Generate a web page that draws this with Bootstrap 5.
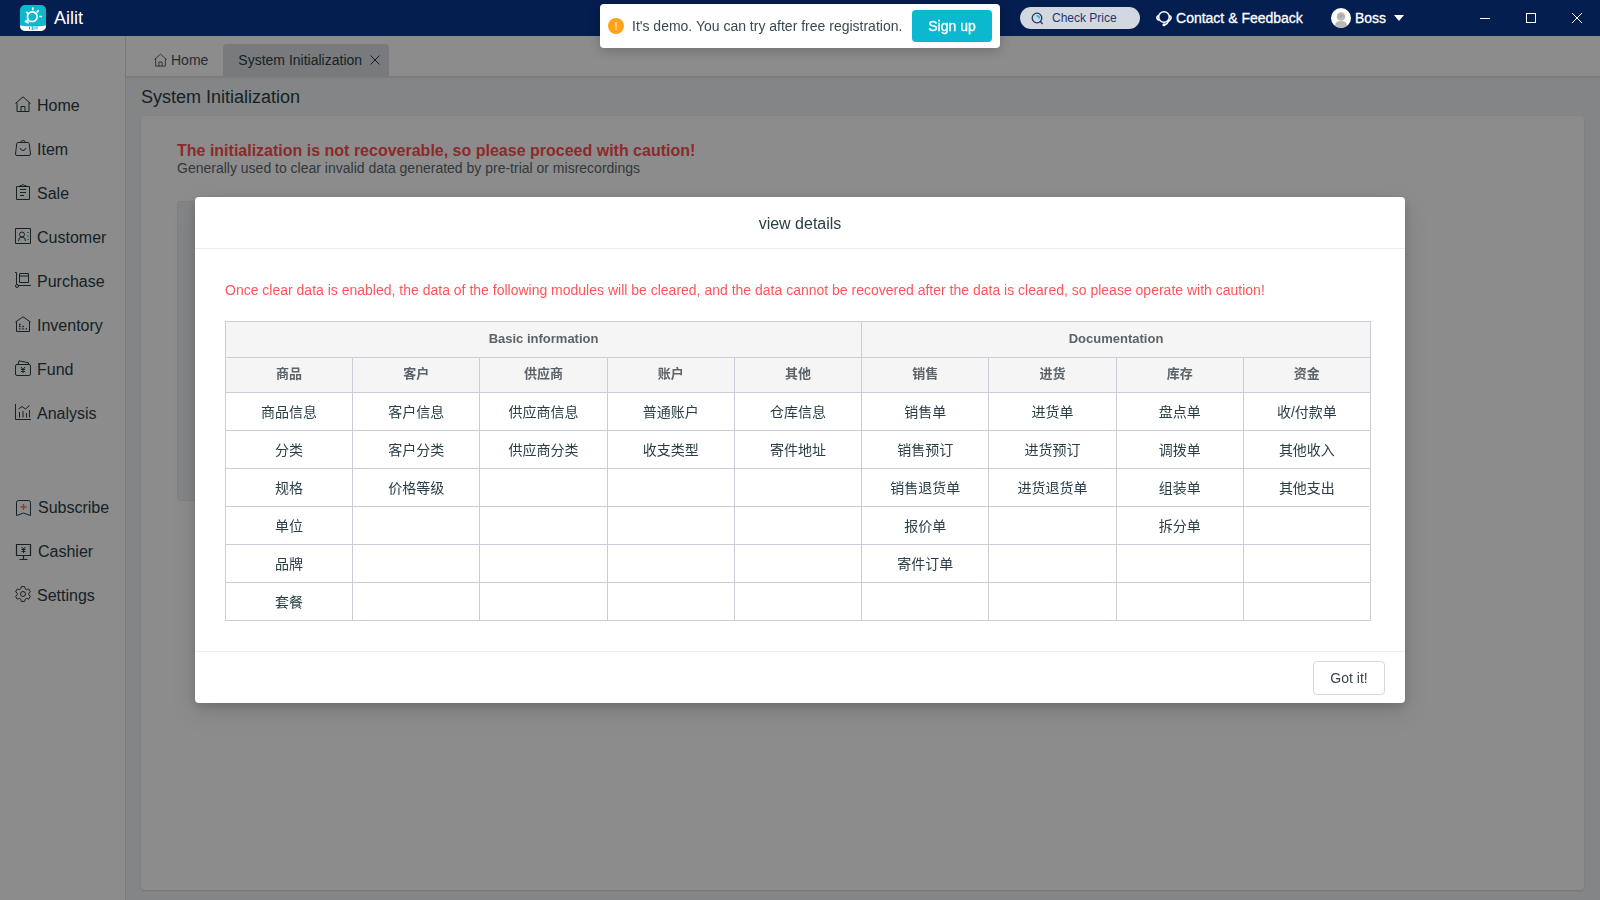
<!DOCTYPE html>
<html lang="en">
<head>
<meta charset="utf-8">
<meta name="viewport" content="width=device-width, initial-scale=1">
<title>Ailit - System Initialization</title>
<link href="https://cdn.jsdelivr.net/npm/bootstrap@5.3.0/dist/css/bootstrap.min.css" rel="stylesheet">
<style>
  :root { --ink: #293e45; --navy: #051e50; --cyan: #0bb8d0; --line: #c8cdd6; }
  body { font-family: "Liberation Sans", "Noto Sans CJK SC", sans-serif; font-size: 14px; line-height: 22px; color: var(--ink); background: #f0f2f5; }
  svg { display: block; flex: none; fill: none; stroke: currentColor; }
  svg.solid { stroke: none; }
  a { color: inherit; text-decoration: none; }
  .topbar { height: 36px; background: var(--navy); color: #fff; z-index: 1060; padding-left: 20px; }
  .brand-name { font-size: 18px; }
  .price-btn { width: 120px; height: 22px; background: #d3d7df; color: #1f3769; font-size: 12px; line-height: 22px; border: 0; border-radius: 11px; padding: 0 11px; }
  .bare-btn { background: none; border: 0; padding: 0; color: inherit; }
  .window-controls { margin-left: 58px; }
  .win-btn { width: 46px; height: 36px; }
  .heavy { -webkit-text-stroke: 0.3px currentColor; }
  .heavy svg { -webkit-text-stroke: 0; }
  .demo-bar { left: 50%; top: 4px; width: 400px; height: 44px; margin-left: -200px; z-index: 1070; color: #3a4a50; border-radius: 4px; box-shadow: 0 3px 12px rgba(0,0,0,.2); padding: 0 8px; }
  .signup-btn { width: 80px; height: 32px; background: var(--cyan); color: #fff; border: 0; border-radius: 4px; padding: 0; font-size: 14px; }
  .sidebar { width: 126px; border-right: 1px solid #dfe1e6; padding-top: 48px; }
  .side-link { height: 44px; font-size: 16px; padding-left: 15px; gap: 6px; }
  .side-link svg { margin-bottom: 4px; }
  .side-link svg.centered { margin-bottom: 0; }
  .side-extra { margin-top: 50px; }
  .tabbar { height: 41px; border-bottom: 1px solid #dcdfe2; padding: 8px 0 0 14px; box-shadow: 0 1px 2px rgba(0,0,0,.06); }
  .tab-link { height: 32px; padding: 0 15px 0 14px; color: #45535a; }
  .tab-link.current { background: #dcdfe3; color: var(--ink); border-radius: 4px 4px 0 0; padding: 0 9px 0 15px; }
  .page-area { padding: 0 16px 10px 15px; }
  .page-title { font-size: 18px; line-height: 24px; margin: 8px 0 7px; font-weight: 400; }
  .panel { border-radius: 4px; padding: 25px 36px; box-shadow: 0 1px 2px rgba(0,0,0,.12); }
  .warn-title { font-size: 16px; line-height: 20px; font-weight: 700; color: #ff4d4f; margin: 0; }
  .warn-sub { line-height: 15px; color: #5c686d; }
  .well-box { height: 300px; width: 80%; margin-top: 25px; background: #f0f2f5; border: 1px solid #e4e7ea; border-radius: 4px; }
  .modal-backdrop.show { opacity: .45; }
  .details-dialog { max-width: 1210px; margin: 197px auto 0; }
  .details-dialog .modal-content { border: 0; border-radius: 4px; color: var(--ink); box-shadow: 0 6px 16px rgba(0,0,0,.08), 0 9px 28px 8px rgba(0,0,0,.06), 0 3px 8px rgba(0,0,0,.12); }
  .details-dialog .modal-header { height: 52px; border-bottom: 1px solid #ebedee; padding: 2px 0 0; }
  .details-dialog .modal-title { font-size: 16px; line-height: 24px; font-weight: 400; }
  .details-dialog .modal-body { padding: 30px 34px 30px 30px; }
  .details-dialog .modal-footer { height: 52px; border-top: 1px solid #ebedee; padding: 0 20px; }
  .details-dialog .modal-footer > * { margin: 0; }
  .caution { color: #ff5558; margin-bottom: 20px; }
  .module-table { table-layout: fixed; border-color: var(--line); margin: 0; text-align: center; }
  .module-table > :not(caption) > * > * { border: 1px solid var(--line); color: var(--ink); padding: 9px 4px 7px; height: 38px; line-height: 21px; background: #fff; }
  .module-table > thead > tr > th { background: #f5f5f5; color: #5a646a; font-size: 13px; line-height: 18px; height: 35px; padding: 7px 4px 9px; }
  .module-table > thead > tr:first-child > th { height: 36px; }
  .got-btn { width: 72px; height: 34px; font-size: 14px; padding: 2px 0 0; border: 1px solid #d5d9dc; border-radius: 4px; color: #34464c; background: #fff; }
</style>
</head>
<body class="vh-100 overflow-hidden d-flex flex-column">

<header class="topbar d-flex align-items-center position-relative flex-shrink-0">
  <a href="#" class="d-flex align-items-center me-auto">
    <svg class="solid" width="26" height="26" viewBox="0 0 26 26">
      <rect width="26" height="26" rx="5" fill="#0bb8d0"/>
      <path d="M0 20.500Q13 22.500 26 20.500V21a5 5 0 0 1-5 5H5a5 5 0 0 1-5-5z" fill="#fff"/>
      <g stroke="#fff" stroke-width="1.700" fill="none" stroke-linecap="round"><path d="M8.500 14.800A4.900 4.900 0 1 1 13.500 16.500L9.500 16.300M8.500 14.800L5.500 16.500M8 17.800L5.800 16.500M12.800 3v1.600M18.300 5.800l-1 1M19.800 11.500h1.500M6.800 7.500l1 .8"/></g>
      <path d="M9.500 22v2.500M11.500 24.500h1.500v-1.500h-1v-1h1.500M15 22v2.500M17 21.500v3" stroke="#0bb8d0" fill="none"/>
    </svg>
    <span class="brand-name ps-2">Ailit</span>
  </a>
  <button type="button" class="price-btn d-flex align-items-center gap-2 me-3">
    <svg width="13" height="13" viewBox="0 0 13 13" stroke-width="1.300"><circle cx="6" cy="6" r="4.800"/><path d="M9.500 9.500l2 2.500"/><path d="M5.500 4Q8 3.500 8.500 6.500" stroke="#25b8cf" stroke-width="1.800"/></svg>
    <span>Check Price</span>
  </button>
  <a href="#" class="heavy d-flex align-items-center gap-1 me-4">
    <svg width="16" height="18" viewBox="0 0 16 18" stroke-width="1.500"><circle cx="8" cy="8" r="5.300"/><path d="M3 6.500Q.5 7 .9 9t2.800 2M13 6.500q2.500.5 2.100 2.500T12.300 12.500Q11 15.500 8 16"/><circle cx="8" cy="15.800" r=".8" fill="currentColor"/></svg>
    Contact &amp; Feedback
  </a>
  <button type="button" class="bare-btn heavy d-flex align-items-center ms-1">
    <svg class="solid" width="20" height="20" viewBox="0 0 20 20"><circle cx="10" cy="10" r="10" fill="#fff"/><circle cx="10" cy="8.500" r="4.300" fill="#b9b9b9"/><path d="M4 18q0-5 6-5t6 5q-6 4-12 0z" fill="#b9b9b9"/><circle cx="10" cy="8" r="1.800" fill="#a5a5a5"/></svg>
    <span class="ms-1 me-2">Boss</span>
    <svg class="solid" width="10" height="6" viewBox="0 0 10 6"><path d="M0 0h10L5 6z" fill="#fff"/></svg>
  </button>
  <div class="window-controls d-flex">
    <button type="button" class="bare-btn win-btn d-flex align-items-center justify-content-center" aria-label="Minimize"><svg width="10" height="10" viewBox="0 0 10 10"><path d="M0 5.500h10"/></svg></button>
    <button type="button" class="bare-btn win-btn d-flex align-items-center justify-content-center" aria-label="Maximize"><svg width="10" height="10" viewBox="0 0 10 10"><rect x=".5" y=".5" width="9" height="9"/></svg></button>
    <button type="button" class="bare-btn win-btn d-flex align-items-center justify-content-center" aria-label="Close"><svg width="10" height="10" viewBox="0 0 10 10"><path d="M0 0l10 10M10 0L0 10"/></svg></button>
  </div>
</header>

<div class="demo-bar bg-white position-absolute d-flex align-items-center">
  <svg class="solid" width="16" height="16" viewBox="0 0 16 16"><circle cx="8" cy="8" r="8" fill="#ffa31a"/><path d="M7.300 4h1.400v5.200H7.300zM7.300 10.500h1.400V12H7.300z" fill="#ffe7c2"/></svg>
  <span class="ps-2 flex-grow-1 text-nowrap">It's demo. You can try after free registration.</span>
  <button type="button" class="signup-btn heavy">Sign up</button>
</div>

<div class="d-flex flex-grow-1">
  <nav class="sidebar bg-white flex-shrink-0">
    <a href="#" class="side-link d-flex align-items-center"><svg width="16" height="16" viewBox="0 0 16 16"><path d="M.5 7.500L8 .8l7.500 6.700M2 6.500v9h12v-9M6 15.500v-5h4v5"/></svg>Home</a>
    <a href="#" class="side-link d-flex align-items-center"><svg width="16" height="16" viewBox="0 0 16 16"><path d="M3 2.500h10q1 0 1.200 1l1.300 10.500q0 1.500-1.500 1.500H2Q.5 15.500.5 14L1.800 3.500q.2-1 1.200-1zM5.500 2.500q.3-2 2.500-2t2.500 2M5 8q1 2.500 3 2.500T11 8"/></svg>Item</a>
    <a href="#" class="side-link d-flex align-items-center"><svg width="16" height="16" viewBox="0 0 16 16"><path d="M1.500 2.500h13v13h-13zM5 2.500v-1h1.500L8 .5l1.500 1H11v1M5 5.500h6M5 8.500h6M5 11.500h4"/></svg>Sale</a>
    <a href="#" class="side-link d-flex align-items-center"><svg width="16" height="16" viewBox="0 0 16 16"><path d="M.5.500h15v15H.5zM3.500 13q0-4 3.500-4t3.500 4M13 4v1M13 7.500v1M13 11v1"/><circle cx="7" cy="6.500" r="2.500"/></svg>Customer</a>
    <a href="#" class="side-link d-flex align-items-center"><svg width="16" height="16" viewBox="0 0 16 16"><path d="M0 .5h1.500v12M4.500 1.500h9v9h-9zM4.500 4h9M3 13.500h13"/><circle cx="2" cy="14" r="1.500"/></svg>Purchase</a>
    <a href="#" class="side-link d-flex align-items-center"><svg width="16" height="16" viewBox="0 0 16 16"><path d="M.5 6L8 .8 15.500 6M1.500 5.500v10h13v-10"/><path d="M4 8.500h1.500M4 10.500h1.500M7.300 10.500h1.500M4 12.800h1.500M7.300 12.800h1.500M10.600 12.800h1.500" stroke-width="1.300"/></svg>Inventory</a>
    <a href="#" class="side-link d-flex align-items-center"><svg width="16" height="16" viewBox="0 0 16 16"><path d="M2 4.500h12q1.500 0 1.500 1.500v8q0 1.500-1.500 1.500H2Q.5 15.500.5 14V6Q.5 4.500 2 4.500zM3 4.500L4 .8l9.500 2v1.500M6 7l2 2.500L10 7M8 9.500V13M6 9.500h4M6 11.500h4"/></svg>Fund</a>
    <a href="#" class="side-link d-flex align-items-center"><svg width="16" height="16" viewBox="0 0 16 16"><path d="M.5 0v15.500H16M4.500 8v5.500M8 7v6.500M11.500 9v4.500M14.500 6v7.500M3.500 5L7 2.500l3.500 2.500L14.500 1.500"/></svg>Analysis</a>
    <div class="side-extra">
      <a href="#" class="side-link d-flex align-items-center"><svg class="centered" width="17" height="16" viewBox="0 0 17 16"><path d="M3.500.5h10q2 0 2 2v13L8.500 13l-7 2.500v-13q0-2 2-2z"/><path d="M8.500 4v6M5.500 7h6" stroke="#ff7a30" stroke-width="1.300"/></svg>Subscribe</a>
      <a href="#" class="side-link d-flex align-items-center"><svg class="centered" width="17" height="16" viewBox="0 0 17 16"><path d="M1.500.5h14v11h-14zM8.500 11.500v4M4.500 15.500h8" stroke-width="1.200"/><path d="M6.500 3l2 2 2-2M8.500 5v4M6.500 5.500h4M6.500 7.500h4"/></svg>Cashier</a>
      <a href="#" class="side-link d-flex align-items-center"><svg width="16" height="16" viewBox="0 0 16 16"><circle cx="8" cy="8" r="2.500"/><path d="M6.300.6h3.400l.5 2.200 1.300.8 2.200-.7 1.700 2.900-1.700 1.500v1.400l1.700 1.500-1.700 2.900-2.200-.7-1.300.8-.5 2.200H6.300l-.5-2.200-1.300-.8-2.200.7L.6 10.200l1.700-1.500V7.300L.6 5.800l1.700-2.900 2.200.7 1.300-.8z" stroke-linejoin="round"/></svg>Settings</a>
    </div>
  </nav>

  <main class="flex-grow-1 d-flex flex-column">
    <div class="tabbar bg-white d-flex">
      <a href="#" class="tab-link d-flex align-items-center"><svg class="me-1" width="13" height="14" viewBox="0 0 16 16" stroke-width="1.100"><path d="M.5 7.500L8 .8l7.500 6.700M2 6.500v9h12v-9M6 15.500v-5h4v5"/></svg>Home</a>
      <a href="#" class="tab-link current d-flex align-items-center" aria-current="page">System Initialization<svg class="ms-2" width="10" height="10" viewBox="0 0 10 10"><path d="M.5.500l9 9M9.500.500l-9 9"/></svg></a>
    </div>
    <div class="page-area flex-grow-1 d-flex flex-column">
      <h1 class="page-title">System Initialization</h1>
      <section class="panel bg-white flex-grow-1">
        <h2 class="warn-title">The initialization is not recoverable, so please proceed with caution!</h2>
        <div class="warn-sub">Generally used to clear invalid data generated by pre-trial or misrecordings</div>
        <div class="well-box"></div>
      </section>
    </div>
  </main>
</div>

<div class="modal-backdrop show"></div>
<div class="modal show d-block" role="dialog" aria-modal="true" aria-labelledby="detailsTitle">
  <div class="modal-dialog details-dialog">
    <div class="modal-content">
      <div class="modal-header justify-content-center"><h2 class="modal-title" id="detailsTitle">view details</h2></div>
      <div class="modal-body">
        <p class="caution">Once clear data is enabled, the data of the following modules will be cleared, and the data cannot be recovered after the data is cleared, so please operate with caution!</p>
        <table class="table module-table">
          <thead>
            <tr><th colspan="5">Basic information</th><th colspan="4">Documentation</th></tr>
            <tr><th>商品</th><th>客户</th><th>供应商</th><th>账户</th><th>其他</th><th>销售</th><th>进货</th><th>库存</th><th>资金</th></tr>
          </thead>
          <tbody>
            <tr><td>商品信息</td><td>客户信息</td><td>供应商信息</td><td>普通账户</td><td>仓库信息</td><td>销售单</td><td>进货单</td><td>盘点单</td><td>收/付款单</td></tr>
            <tr><td>分类</td><td>客户分类</td><td>供应商分类</td><td>收支类型</td><td>寄件地址</td><td>销售预订</td><td>进货预订</td><td>调拨单</td><td>其他收入</td></tr>
            <tr><td>规格</td><td>价格等级</td><td></td><td></td><td></td><td>销售退货单</td><td>进货退货单</td><td>组装单</td><td>其他支出</td></tr>
            <tr><td>单位</td><td></td><td></td><td></td><td></td><td>报价单</td><td></td><td>拆分单</td><td></td></tr>
            <tr><td>品牌</td><td></td><td></td><td></td><td></td><td>寄件订单</td><td></td><td></td><td></td></tr>
            <tr><td>套餐</td><td></td><td></td><td></td><td></td><td></td><td></td><td></td><td></td></tr>
          </tbody>
        </table>
      </div>
      <div class="modal-footer"><button type="button" class="btn got-btn">Got it!</button></div>
    </div>
  </div>
</div>
<script src="https://cdn.jsdelivr.net/npm/bootstrap@5.3.0/dist/js/bootstrap.bundle.min.js"></script>
</body>
</html>
